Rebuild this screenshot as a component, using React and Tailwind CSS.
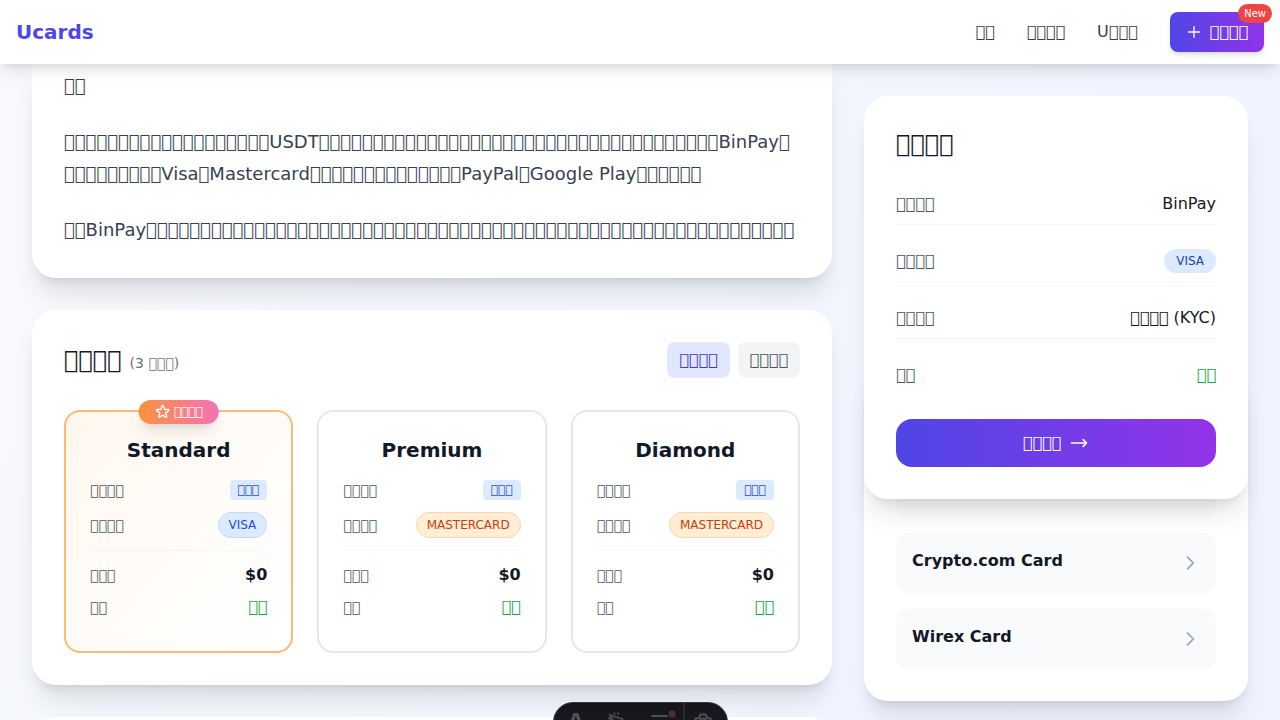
import React from 'react';

// Text whose glyphs are unavailable is drawn with the font's own missing-glyph box.
const g = (n) => '\u{3F000}'.repeat(n);

const Icon = ({ d, className, sw = 2 }) => (
  <svg className={className} viewBox="0 0 24 24" fill="none" stroke="currentColor" strokeWidth={sw} strokeLinecap="round" strokeLinejoin="round">
    <path d={d} />
  </svg>
);

const PLUS = 'M12 4v16m8-8H4';
const ARROW = 'M17 8l4 4m0 0l-4 4m4-4H3';
const CHEVRON = 'M9 5l7 7-7 7';
const STAR =
  'M11.049 2.927c.3-.921 1.603-.921 1.902 0l1.519 4.674a1 1 0 00.95.69h4.915c.969 0 1.371 1.24.588 1.81l-3.976 2.888a1 1 0 00-.363 1.118l1.518 4.674c.3.922-.755 1.688-1.538 1.118l-3.976-2.888a1 1 0 00-1.176 0l-3.976 2.888c-.783.57-1.838-.197-1.538-1.118l1.518-4.674a1 1 0 00-.363-1.118l-3.976-2.888c-.784-.57-.38-1.81.588-1.81h4.914a1 1 0 00.951-.69l1.519-4.674z';

const tiers = [
  { name: 'Standard', network: 'VISA', featured: true },
  { name: 'Premium', network: 'MASTERCARD' },
  { name: 'Diamond', network: 'MASTERCARD' },
];

function Header() {
  return (
    <header className="relative z-30 flex h-16 items-center justify-between bg-white px-4 shadow-lg">
      <span className="text-xl font-bold text-[#4f46e5]">Ucards</span>
      <nav className="flex items-center gap-8 text-[#374151]">
        <span>{g(2)}</span>
        <span>{g(4)}</span>
        <span>U{g(3)}</span>
        <div className="relative flex h-10 items-center gap-2 rounded-lg bg-linear-to-r/srgb from-[#4f46e5] to-[#9333ea] px-4 text-white shadow-md">
          <Icon d={PLUS} className="size-4" />
          <span>{g(4)}</span>
          <span className="absolute -top-2 -right-2 rounded-full bg-[#ef4444] px-1.5 py-0.5 text-[10px] leading-[15px] text-white">New</span>
        </div>
      </nav>
    </header>
  );
}

function Tier({ name, network, featured }) {
  return (
    <div
      className={
        'relative rounded-2xl border-2 px-6 pt-6 pb-8 ' +
        (featured ? 'border-[#fdba74] bg-linear-to-br/srgb from-[#fff7ed] via-[#fffcf8] to-white' : 'border-[#e5e7eb] bg-white')
      }
    >
      {featured && (
        <div className="absolute -top-3 left-1/2 flex h-6 -translate-x-1/2 items-center rounded-full bg-linear-to-r/srgb from-[#fb923c] to-[#f472b6] px-4 text-xs whitespace-nowrap text-white shadow-lg">
          <Icon d={STAR} className="mr-[3.800px] size-4" />
          {g(4)}
        </div>
      )}
      <h3 className="mb-4 text-center text-xl font-bold text-[#111827]">{name}</h3>
      <div className="flex flex-col gap-3">
        <div className="flex items-center justify-between">
          <span className="text-sm text-[#4b5563]">{g(4)}</span>
          <span className="rounded bg-[#dbeafe] px-2 py-0.5 text-xs text-[#1d4ed8]">{g(3)}</span>
        </div>
        <div className="flex items-center justify-between">
          <span className="text-sm text-[#4b5563]">{g(4)}</span>
          <span
            className={
              'rounded-full border px-2.5 py-1 text-xs ' +
              (featured ? 'border-[#bfdbfe] bg-[#dbeafe] text-[#1d4ed8]' : 'border-[#fed7aa] bg-[#ffedd5] text-[#c2410c]')
            }
          >
            {network}
          </span>
        </div>
        <div className="flex flex-col gap-2 border-t border-[#f3f4f6] pt-3">
          <div className="flex items-center justify-between">
            <span className="text-sm text-[#4b5563]">{g(3)}</span>
            <span className="font-bold text-[#111827]">$0</span>
          </div>
          <div className="flex items-center justify-between">
            <span className="text-sm text-[#4b5563]">{g(2)}</span>
            <span className="text-[#16a34a]">{g(2)}</span>
          </div>
        </div>
      </div>
    </div>
  );
}

function InfoRow({ label, children, last }) {
  return (
    <div className={'flex items-center justify-between ' + (last ? '' : 'border-b border-[#f3f4f6] pb-2')}>
      <span className="text-[#4b5563]">{label}</span>
      {children}
    </div>
  );
}

function Related({ name }) {
  return (
    <div className="flex h-15 items-center justify-between rounded-xl bg-[#f9fafb] p-4">
      <span className="mb-1 font-bold text-[#111827]">{name}</span>
      <Icon d={CHEVRON} className="size-5 text-[#9ca3af]" />
    </div>
  );
}

function Toolbar() {
  return (
    <div className="absolute top-[702px] left-[552.500px] z-40 flex h-10 w-[175px] overflow-hidden rounded-[20px] border border-[#343841] bg-linear-to-b from-[#13151a] to-[#1d1f25] text-[#4e5056]">
      <svg className="h-10 w-[173px] shrink-0" viewBox="554.5 703 173 40" fill="none" stroke="currentColor" strokeWidth="1.6">
        <path d="M570 724l3.800-11h5l3.800 11h-3.600l-2.700-8-2.700 8z" fill="currentColor" stroke="none" />
        <path d="M624 719.500l-13.500-4.500 4 7M609 717l5 7M614.500 712.500l1 2M618.500 712.500v2" />
        <path d="M652 716h16M652 722h16" strokeWidth="2" />
        <circle cx="672.500" cy="714" r="3.500" fill="#552b3b" stroke="none" />
        <path d="M684.500 703v20" stroke="#30333a" strokeWidth="1.500" />
        <path d="M696 723v-4.500l3.500-.5 1.500-3.500h5l1.500 3.500 3.500.5v4.500" strokeWidth="2" />
        <circle cx="703.500" cy="722" r="3.500" strokeWidth="2" />
      </svg>
    </div>
  );
}

export default function App() {
  return (
    <div className="relative h-[720px] w-[1280px] overflow-hidden bg-linear-to-br/srgb from-[#f9fafb] via-[#f1f5ff] to-[#eef1ff] bg-[length:1280px_2600px] bg-[position:0_-400px] font-['DejaVu_Sans',sans-serif] text-base">
      <Header />
      <main className="flex gap-8 px-8">
        <div className="w-[800px] shrink-0">
          <section className="rounded-b-3xl bg-white px-8 pt-1.5 pb-8 text-lg leading-8 whitespace-nowrap text-[#374151] shadow-xl">
            <p>{g(2)}</p>
            <p className="mt-6">
              {g(19)}USDT{g(37)}BinPay{g(1)}
              <br />
              {g(9)}Visa{g(1)}Mastercard{g(14)}PayPal{g(1)}Google Play{g(6)}
            </p>
            <p className="mt-6">
              {g(2)}BinPay{g(60)}
            </p>
          </section>

          <section className="mt-8 rounded-3xl bg-white p-8 shadow-xl">
            <div className="mb-8 flex items-center justify-between">
              <h2 className="text-2xl text-[#111827]">
                {g(4)}
                <span className="ml-2 text-sm text-[#6b7280]">(3 {g(3)})</span>
              </h2>
              <div className="flex gap-2">
                <span className="rounded-lg bg-[#e0e7ff] px-3 py-1.5 text-[#4338ca]">{g(4)}</span>
                <span className="rounded-lg bg-[#f3f4f6] px-3 py-1.5 text-[#4b5563]">{g(4)}</span>
              </div>
            </div>
            <div className="grid grid-cols-3 gap-6">
              {tiers.map((t) => (
                <Tier key={t.name} {...t} />
              ))}
            </div>
          </section>

          <section className="mt-8 h-40 rounded-3xl bg-white shadow-xl" />
        </div>

        <aside className="w-96 shrink-0 pt-8">
          <section className="relative z-10 rounded-3xl bg-white p-8 shadow-xl">
            <h2 className="mb-8 text-2xl text-[#111827]">{g(4)}</h2>
            <div className="flex flex-col gap-6">
              <InfoRow label={g(4)}>
                <span className="text-[#111827]">BinPay</span>
              </InfoRow>
              <InfoRow label={g(4)}>
                <span className="rounded-full bg-[#dbeafe] px-3 py-1 text-xs text-[#1e40af]">VISA</span>
              </InfoRow>
              <InfoRow label={g(4)}>
                <span className="text-[#111827]">{g(4)} (KYC)</span>
              </InfoRow>
              <InfoRow label={g(2)} last>
                <span className="text-[#16a34a]">{g(2)}</span>
              </InfoRow>
            </div>
            <div className="mt-8 flex h-12 items-center justify-center gap-2 rounded-2xl bg-linear-to-r/srgb from-[#4f46e5] to-[#9333ea] text-white">
              <span>{g(4)}</span>
              <Icon d={ARROW} className="size-5" />
            </div>
          </section>

          <section className="-mt-[130px] rounded-3xl bg-white p-8 pt-22 shadow-xl">
            <div className="flex flex-col gap-4">
              <Related name="" />
              <Related name="Crypto.com Card" />
              <Related name="Wirex Card" />
            </div>
          </section>
        </aside>
      </main>
      <Toolbar />
    </div>
  );
}
